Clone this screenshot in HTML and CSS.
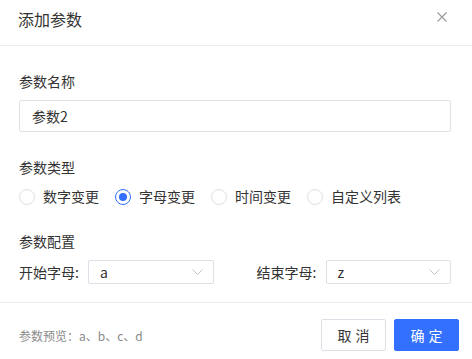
FILE: index.html
```html
<!DOCTYPE html>
<html lang="zh-CN">
<head>
<meta charset="utf-8">
<link rel="stylesheet" href="styles.css">
</head>
<body>
<div class="dialog">
  <div class="dialog-header">
    <span class="dialog-title">添加参数</span>
    <svg class="close" width="10" height="10" viewBox="0 0 10 10"><path d="M0.5 0.5 L9.5 9.5 M9.5 0.5 L0.5 9.5" stroke="#9a9a9a" stroke-width="1.1" fill="none"/></svg>
  </div>
  <div class="dialog-body">
    <div class="form-item">
      <div class="form-label">参数名称</div>
      <div class="input">参数2</div>
    </div>
    <div class="form-item">
      <div class="form-label">参数类型</div>
      <div class="radio-group">
        <label class="radio"><span class="radio-circle"></span><span>数字变更</span></label>
        <label class="radio"><span class="radio-circle checked"></span><span>字母变更</span></label>
        <label class="radio"><span class="radio-circle"></span><span>时间变更</span></label>
        <label class="radio"><span class="radio-circle"></span><span>自定义列表</span></label>
      </div>
    </div>
    <div class="form-item last">
      <div class="form-label">参数配置</div>
      <div class="config-grid">
        <div class="config-field">
          <span class="config-label">开始字母:</span>
          <div class="select"><span>a</span><svg width="11" height="6" viewBox="0 0 11 6"><path d="M0.5 0.5 L5.5 5.5 L10.5 0.5" stroke="#c0c4cc" stroke-width="1" fill="none"/></svg></div>
        </div>
        <div class="config-field">
          <span class="config-label">结束字母:</span>
          <div class="select"><span>z</span><svg width="11" height="6" viewBox="0 0 11 6"><path d="M0.5 0.5 L5.5 5.5 L10.5 0.5" stroke="#c0c4cc" stroke-width="1" fill="none"/></svg></div>
        </div>
      </div>
    </div>
  </div>
  <div class="dialog-footer">
    <span class="preview">参数预览：a、b、c、d</span>
    <div class="actions">
      <button class="btn">取消</button>
      <button class="btn primary">确定</button>
    </div>
  </div>
</div>
</body>
</html>
```
FILE: styles.css
```css
* { box-sizing: border-box; }
html, body { margin: 0; padding: 0; background: #fff; }
body {
  font-family: "Noto Sans CJK SC", "Noto Sans", sans-serif;
  color: #333;
  width: 472px;
  height: 359px;
  overflow: hidden;
}
.dialog { width: 472px; background: #fff; }
.dialog-header {
  height: 46px;
  padding: 8px 24px 0 18px;
  border-bottom: 1px solid #ebebeb;
  display: flex;
  justify-content: space-between;
  align-items: flex-start;
}
.dialog-title { font-size: 16px; line-height: 22px; color: #333; }
.close { margin-top: 4px; margin-right: 1px; }
.dialog-body { padding: 24px 21px 18px 19px; }
.form-item { margin-bottom: 24px; }
.form-item.last { margin-bottom: 0; }
.form-label { font-size: 14px; line-height: 22px; margin-bottom: 8px; color: #333; }
.input {
  height: 32px;
  border: 1px solid #dcdfe6;
  border-radius: 2px;
  padding: 0 12px;
  font-size: 14px;
  line-height: 30px;
  color: #333;
}
.radio-group { display: flex; gap: 16px; height: 20px; }
.radio { display: flex; align-items: center; gap: 8px; font-size: 14px; line-height: 20px; color: #333; }
.radio-circle {
  width: 16px; height: 16px;
  border: 1px solid #dcdfe6;
  border-radius: 50%;
  display: flex; align-items: center; justify-content: center;
  margin-top: 1px;
}
.radio-circle.checked { border-color: #3370ff; }
.radio-circle.checked::after {
  content: "";
  width: 8px; height: 8px;
  border-radius: 50%;
  background: #3370ff;
}
.config-grid { display: grid; grid-template-columns: 1fr 1fr; column-gap: 43px; }
.config-field { display: flex; align-items: center; }
.config-label { font-size: 14px; line-height: 24px; width: 69px; flex: none; color: #333; }
.select {
  flex: 1;
  height: 24px;
  border: 1px solid #dcdfe6;
  border-radius: 2px;
  padding: 0 10px 0 11px;
  display: flex; align-items: center; justify-content: space-between;
  font-size: 14px;
  line-height: 22px;
  color: #333;
}
.dialog-footer {
  border-top: 1px solid #ebebeb;
  padding: 16px 13px 0 19px;
  display: flex;
  justify-content: space-between;
  align-items: center;
}
.preview { font-size: 12px; color: #8a8a8a; }
.actions { display: flex; gap: 8px; }
.btn {
  width: 65px; height: 32px;
  border: 1px solid #dcdfe6;
  border-radius: 2px;
  background: #fff;
  font-family: inherit;
  font-size: 14px;
  color: #333;
  letter-spacing: 4px;
  text-indent: 4px;
  padding: 0;
}
.btn.primary { background: #3370ff; border-color: #3370ff; color: #fff; }
```
